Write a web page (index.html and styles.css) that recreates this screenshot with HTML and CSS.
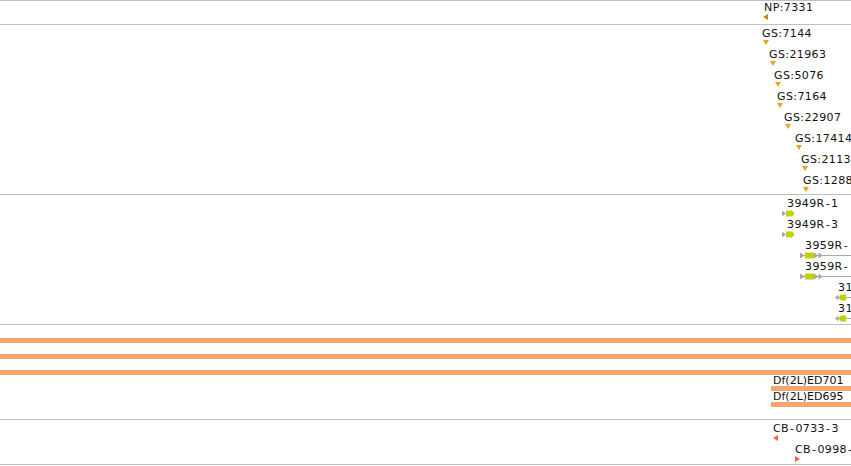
FILE: index.html
```html
<!DOCTYPE html>
<html lang="en">
<head>
    <meta charset="UTF-8">
    <title>Tracks</title>
    <link rel="stylesheet" href="styles.css">
</head>
<body>
    <div class="tracks">
        <!-- NP track -->
        <div class="track t-np">
            <div class="feat" style="left:764px;top:0px">
                <span class="label">NP:7331</span>
                <span class="tri left np" style="margin-left:-1px"></span>
            </div>
        </div>

        <!-- GS track -->
        <div class="track t-gs">
            <div class="feat" style="left:762px;top:2px"><span class="label">GS:7144</span><span class="tri down gs" style="margin-left:1px"></span></div>
            <div class="feat" style="left:769px;top:23px"><span class="label">GS:21963</span><span class="tri down gs" style="margin-left:1px"></span></div>
            <div class="feat" style="left:774px;top:44px"><span class="label">GS:5076</span><span class="tri down gs" style="margin-left:1px"></span></div>
            <div class="feat" style="left:777px;top:65px"><span class="label">GS:7164</span><span class="tri down gs"></span></div>
            <div class="feat" style="left:784px;top:86px"><span class="label">GS:22907</span><span class="tri down gs" style="margin-left:1px"></span></div>
            <div class="feat" style="left:795px;top:107px"><span class="label">GS:17414</span><span class="tri down gs" style="margin-left:1px"></span></div>
            <div class="feat" style="left:801px;top:128px"><span class="label">GS:2113</span><span class="tri down gs" style="margin-left:1px"></span></div>
            <div class="feat" style="left:803px;top:149px"><span class="label">GS:1288</span><span class="tri down gs"></span></div>
        </div>

        <!-- transcript track -->
        <div class="track t-tx">
            <div class="feat" style="left:787px;top:2px">
                <span class="label">3949R<span class="hy">-</span>1</span>
                <svg class="glyph" style="margin-left:-5px" width="14" height="7" viewBox="0 0 14 7">
                    <path d="M0 0.5 L4 3.5 L0 6.5 Z" fill="#a8a8a8"/>
                    <path d="M4 0.5 H10 L12.5 3.5 L10 6.5 H4 Z" fill="#c3d100"/>
                </svg>
            </div>
            <div class="feat" style="left:787px;top:23px">
                <span class="label">3949R<span class="hy">-</span>3</span>
                <svg class="glyph" style="margin-left:-5px" width="14" height="7" viewBox="0 0 14 7">
                    <path d="M0 0.5 L4 3.5 L0 6.5 Z" fill="#a8a8a8"/>
                    <path d="M4 0.5 H10 L12.5 3.5 L10 6.5 H4 Z" fill="#c3d100"/>
                </svg>
            </div>
            <div class="feat" style="left:805px;top:44px">
                <span class="label">3959R<span class="hy">-</span></span>
                <svg class="glyph" style="margin-left:-5px" width="60" height="7" viewBox="0 0 60 7">
                    <path d="M0 3.5 H60" stroke="#a8a8a8" stroke-width="1"/>
                    <path d="M0 0.5 L5 3.5 L0 6.5 Z" fill="#a8a8a8"/>
                    <rect x="5" y="0.5" width="9" height="6" fill="#c3d100"/>
                    <path d="M14 0.5 L18.5 3.5 L14 6.5 Z M18.5 0.5 L23 3.5 L18.5 6.5 Z" fill="#a8a8a8"/>
                </svg>
            </div>
            <div class="feat" style="left:805px;top:65px">
                <span class="label">3959R<span class="hy">-</span></span>
                <svg class="glyph" style="margin-left:-5px" width="60" height="7" viewBox="0 0 60 7">
                    <path d="M0 3.5 H60" stroke="#a8a8a8" stroke-width="1"/>
                    <path d="M0 0.5 L5 3.5 L0 6.5 Z" fill="#a8a8a8"/>
                    <rect x="5" y="0.5" width="9" height="6" fill="#c3d100"/>
                    <path d="M14 0.5 L18.5 3.5 L14 6.5 Z M18.5 0.5 L23 3.5 L18.5 6.5 Z" fill="#a8a8a8"/>
                </svg>
            </div>
            <div class="feat" style="left:838px;top:86px">
                <span class="label">31</span>
                <svg class="glyph" style="margin-left:-3px" width="20" height="7" viewBox="0 0 20 7">
                    <path d="M0 3.5 H20" stroke="#a8a8a8" stroke-width="1"/>
                    <path d="M3.5 0.5 L0 3.5 L3.5 6.5 Z" fill="#a8a8a8"/>
                    <path d="M3.5 3.5 L6 0.5 H11 V6.5 H6 Z" fill="#c3d100"/>
                </svg>
            </div>
            <div class="feat" style="left:838px;top:107px">
                <span class="label">31</span>
                <svg class="glyph" style="margin-left:-3px" width="20" height="7" viewBox="0 0 20 7">
                    <path d="M0 3.5 H20" stroke="#a8a8a8" stroke-width="1"/>
                    <path d="M3.5 0.5 L0 3.5 L3.5 6.5 Z" fill="#a8a8a8"/>
                    <path d="M3.5 3.5 L6 0.5 H11 V6.5 H6 Z" fill="#c3d100"/>
                </svg>
            </div>
        </div>

        <!-- deficiency track -->
        <div class="track t-df">
            <div class="span-bar"></div>
            <div class="span-bar"></div>
            <div class="span-bar"></div>
            <div class="feat df" style="left:773px;top:50px">
                <span class="label">Df(2L)ED701</span>
                <span class="df-bar"></span>
            </div>
            <div class="feat df" style="left:773px;top:66px">
                <span class="label">Df(2L)ED695</span>
                <span class="df-bar"></span>
            </div>
        </div>

        <!-- CB track -->
        <div class="track t-cb">
            <div class="feat" style="left:773px;top:2px">
                <span class="label">CB<span class="hy">-</span>0733<span class="hy">-</span>3</span>
                <span class="tri left cb"></span>
            </div>
            <div class="feat" style="left:795px;top:23px">
                <span class="label">CB<span class="hy">-</span>0998<span class="hy">-</span></span>
                <span class="tri right cb"></span>
            </div>
        </div>
    </div>
</body>
</html>
```

FILE: styles.css
```css
*{
    padding: 0;
    margin: 0;
}
html, body {
    width: 851px;
    height: 466px;
    overflow: hidden;
    background: #fff;
}
body {
    font-family: "DejaVu Sans", sans-serif;
    font-size: 11px;
    color: #111;
}
.tracks {
    width: 851px;
    border-top: 1px solid #c0c0c0;
}
.track {
    position: relative;
    overflow: hidden;
    border-bottom: 1px solid #c0c0c0;
}
.t-np { height: 23px; }
.t-gs { height: 169px; }
.t-tx { height: 129px; }
.t-df { height: 95px; padding-top: 13px; box-sizing: border-box; }
.t-cb { height: 44px; }

/* a feature: label over its glyph */
.feat {
    position: absolute;
    display: flex;
    flex-direction: column;
    align-items: flex-start;
    white-space: nowrap;
}
.label {
    display: block;
    height: 13px;
    line-height: 13px;
    letter-spacing: 0.4px;
}
.hy {
    padding: 0 1px;
}
.glyph {
    display: block;
}
.tri {
    display: block;
    width: 0;
    height: 0;
    border-style: solid;
}
.tri.down {
    border-width: 5px 3px 0 3px;
    border-color: #eda21f transparent transparent transparent;
}
.tri.left {
    border-width: 3px 5px 3px 0;
}
.tri.right {
    border-width: 3px 0 3px 5px;
}
.tri.left.np {
    border-color: transparent #c48a0a transparent transparent;
}
.tri.left.cb {
    border-color: transparent #f2623c transparent transparent;
}
.tri.right.cb {
    border-color: transparent transparent transparent #f2623c;
}

/* deficiency spans */
.span-bar {
    height: 5px;
    background: #f6a46e;
    margin-bottom: 11px;
}
.feat.df .label {
    height: 11px;
    line-height: 11px;
    letter-spacing: 0;
}
.df-bar {
    display: block;
    width: 90px;
    height: 5px;
    margin-left: -2px;
    background: #f6a46e;
}
```
